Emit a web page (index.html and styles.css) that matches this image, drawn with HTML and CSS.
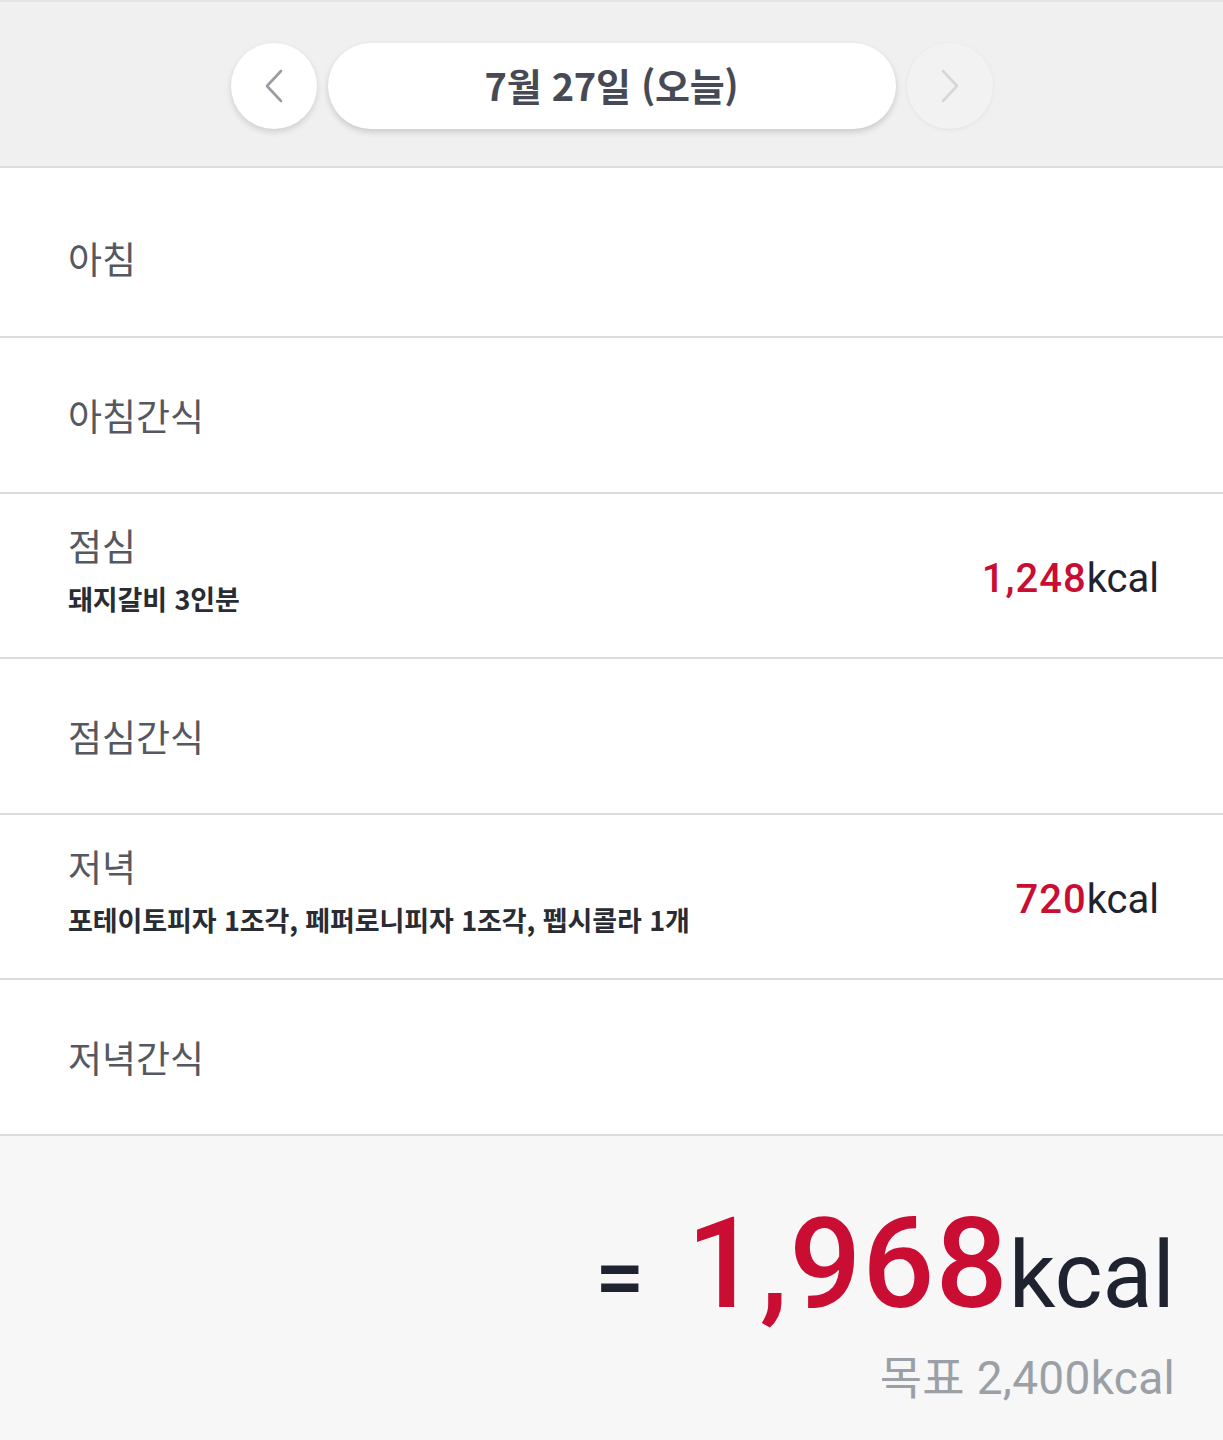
FILE: index.html
```html
<!DOCTYPE html>
<html lang="ko">
<head>
  <meta charset="UTF-8" />
  <meta name="viewport" content="width=device-width, initial-scale=1.0" />
  <title>식단 기록</title>
  <link rel="stylesheet" href="styles.css">
</head>
<body>
  <header class="date-bar">
    <button class="nav-btn">
      <svg width="22" height="34" viewBox="0 0 22 34"><path d="M18 2 L4 17 L18 32" fill="none" stroke="#9a9ca2" stroke-width="2.6" stroke-linecap="round" stroke-linejoin="round"/></svg>
    </button>
    <div class="date-pill">7월 27일 (오늘)</div>
    <button class="nav-btn disabled">
      <svg width="22" height="34" viewBox="0 0 22 34"><path d="M4 2 L18 17 L4 32" fill="none" stroke="#d6d6d8" stroke-width="2.6" stroke-linecap="round" stroke-linejoin="round"/></svg>
    </button>
  </header>

  <main class="meals">
    <div class="meal first">
      <div class="meal-info"><div class="meal-name">아침</div></div>
    </div>
    <div class="meal">
      <div class="meal-info"><div class="meal-name">아침간식</div></div>
    </div>
    <div class="meal has-food">
      <div class="meal-info">
        <div class="meal-name">점심</div>
        <div class="meal-foods">돼지갈비 3인분</div>
      </div>
      <div class="meal-kcal"><span class="num">1,248</span>kcal</div>
    </div>
    <div class="meal">
      <div class="meal-info"><div class="meal-name">점심간식</div></div>
    </div>
    <div class="meal has-food">
      <div class="meal-info">
        <div class="meal-name">저녁</div>
        <div class="meal-foods">포테이토피자 1조각, 페퍼로니피자 1조각, 펩시콜라 1개</div>
      </div>
      <div class="meal-kcal"><span class="num">720</span>kcal</div>
    </div>
    <div class="meal">
      <div class="meal-info"><div class="meal-name">저녁간식</div></div>
    </div>
  </main>

  <footer class="total">
    <div class="total-line"><span class="eq">=</span><span class="total-num">1,968</span><span class="total-unit">kcal</span></div>
    <div class="goal">목표 2,400kcal</div>
  </footer>
</body>
</html>
```

FILE: styles.css
```css
body { margin: 0; padding: 0; background: #f7f7f8; font-family: Roboto, "Noto Sans CJK KR", sans-serif; color: #222; }

.date-bar { display: flex; justify-content: center; align-items: center; gap: 11px; background: #f0f0f0; border-top: 2px solid #e4e4e4; border-bottom: 2px solid #dedede; box-sizing: border-box; height: 168px; padding-top: 4px; }
.nav-btn { width: 86px; height: 86px; border-radius: 50%; border: none; background: #fff; box-shadow: 0 3px 6px rgba(0,0,0,0.14); display: flex; align-items: center; justify-content: center; padding: 0; }
.nav-btn.disabled { background: #f2f2f2; box-shadow: 0 1px 4px rgba(0,0,0,0.06); }
.date-pill { width: 568px; height: 86px; border-radius: 43px; background: #fff; box-shadow: 0 3px 6px rgba(0,0,0,0.16); display: flex; align-items: center; justify-content: center; font-family: "Noto Sans CJK KR", sans-serif; font-size: 38px; font-weight: 700; color: #474a55; letter-spacing: -0.3px; padding-bottom: 4px; box-sizing: border-box; }

.meals { background: #fff; }
.meal { display: flex; align-items: center; justify-content: space-between; height: 154px; padding: 0 64px 0 68px; border-bottom: 2px solid #dcdcdc; }
.meal.first { height: 170px; padding-top: 12px; box-sizing: border-box; }
.meal.has-food { height: 163px; }
.meal-name { font-family: "Noto Sans CJK KR", sans-serif; font-size: 37px; line-height: 44px; color: #555861; }
.meal.has-food .meal-info { margin-top: -14px; }
.meal-foods { font-family: "Noto Sans CJK KR", sans-serif; font-size: 27px; font-weight: 700; color: #2a2c33; margin-top: 17px; line-height: 30px; letter-spacing: -0.1px; }
.meal-kcal { font-size: 40px; color: #1f2330; line-height: 1; margin-top: 6px; }
.meal-kcal .num { color: #c90d33; font-weight: 500; letter-spacing: 1px; }

.total { background: #f7f7f8; padding: 64px 48px 40px 0; text-align: right; }
.total-line { display: flex; justify-content: flex-end; align-items: baseline; line-height: 1; }
.eq { font-size: 88px; font-weight: 500; color: #1f2330; margin-right: 42px; }
.total-num { font-size: 127px; font-weight: 500; color: #c90d33; letter-spacing: 1px; }
.total-unit { font-size: 92px; color: #1f2330; }
.goal { font-family: Roboto, "Noto Sans CJK KR", sans-serif; font-size: 46px; color: #9aa0a6; margin-top: 28px; line-height: 1; letter-spacing: 0.3px; }
```
